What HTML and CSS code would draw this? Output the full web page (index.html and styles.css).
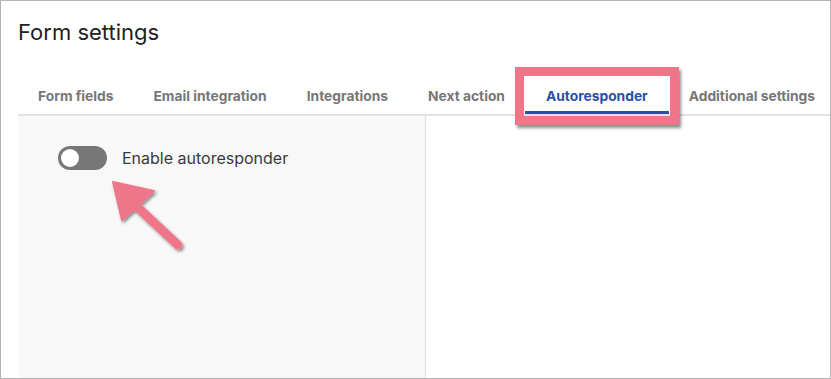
FILE: index.html
```html
<!DOCTYPE html>
<html lang="en">
<head>
    <meta charset="UTF-8">
    <title>Form settings</title>
    <link rel="stylesheet" href="styles.css">
</head>
<body>

<div class="frame">
    <h1 class="page-title">Form settings</h1>

    <div class="tabs">
        <a href="#" class="tab">Form fields</a>
        <a href="#" class="tab">Email integration</a>
        <a href="#" class="tab">Integrations</a>
        <a href="#" class="tab">Next action</a>
        <a href="#" class="tab tab-active">Autoresponder
            <span class="callout-box"></span>
        </a>
        <a href="#" class="tab">Additional settings</a>
    </div>

    <div class="content">
        <div class="settings-panel">
            <label class="switch-row">
                <span class="switch"><span class="switch-knob"></span></span>
                <span class="switch-label">Enable autoresponder</span>
            </label>

            <!-- annotation arrow -->
            <svg class="callout-arrow" width="90" height="90" viewBox="0 0 90 90">
                <defs>
                    <filter id="arrowShadow" x="-20%" y="-20%" width="150%" height="150%">
                        <feDropShadow dx="1.5" dy="2" stdDeviation="1.5" flood-color="#000" flood-opacity="0.45"/>
                    </filter>
                </defs>
                <g filter="url(#arrowShadow)" fill="#ef7588" stroke="#ef7588" stroke-linecap="round" stroke-linejoin="round">
                    <line x1="72" y1="73" x2="28" y2="32" stroke-width="9"/>
                    <polygon points="7,10 48,19 16,48" stroke-width="2"/>
                </g>
            </svg>
        </div>
        <div class="preview-panel"></div>
    </div>
</div>

</body>
</html>
```

FILE: styles.css
```css
body {
    margin: 0;
    font-family: 'Inter', 'Roboto', sans-serif;
    background-color: #fff;
}

.frame {
    box-sizing: border-box;
    width: 831px;
    height: 379px;
    border: 1px solid #b4b4b4;
    display: flex;
    flex-direction: column;
    overflow: hidden;
}

.page-title {
    margin: 0;
    padding: 17px 0 0 17px;
    font-size: 22px;
    font-weight: 400;
    line-height: 28px;
    color: #222;
}

.tabs {
    display: flex;
    margin: 32px 0 0 17px;
    border-bottom: 2px solid #e2e2e2;
}

.tab {
    position: relative;
    padding: 10px 20px 9px;
    font-size: 13.8px;
    font-weight: 700;
    line-height: 17px;
    color: #777;
    text-decoration: none;
    white-space: nowrap;
}

.tab-active {
    color: #2a4fa8;
    padding-left: 21px;
    padding-right: 21px;
}

.tab-active::after {
    content: '';
    position: absolute;
    left: 0;
    right: 0;
    bottom: 0;
    height: 3px;
    background-color: #2a4fa8;
}

/* pink highlight drawn over the active tab */
.callout-box {
    position: absolute;
    top: -11px;
    left: -10px;
    right: -10px;
    bottom: -11px;
    border: 9px solid #ef7588;
    box-shadow: 2px 3px 3px rgba(0, 0, 0, 0.45);
}

.content {
    flex: 1;
    display: flex;
    margin-left: 17px;
}

.settings-panel {
    position: relative;
    width: 408px;
    background-color: #f8f8f8;
    border-right: 1px solid #dcdcdc;
    padding: 30px 0 0 40px;
    box-sizing: border-box;
}

.preview-panel {
    flex: 1;
    background-color: #fff;
}

.switch-row {
    display: flex;
    align-items: center;
    gap: 15px;
}

.switch {
    display: flex;
    align-items: center;
    width: 49px;
    height: 24px;
    border-radius: 12px;
    background-color: #777;
    padding: 0 3px;
    box-sizing: border-box;
}

.switch-knob {
    width: 18px;
    height: 18px;
    border-radius: 50%;
    background-color: #fff;
}

.switch-label {
    font-size: 16px;
    color: #3a3a3a;
}

.callout-arrow {
    position: absolute;
    left: 88px;
    top: 56px;
}
```
